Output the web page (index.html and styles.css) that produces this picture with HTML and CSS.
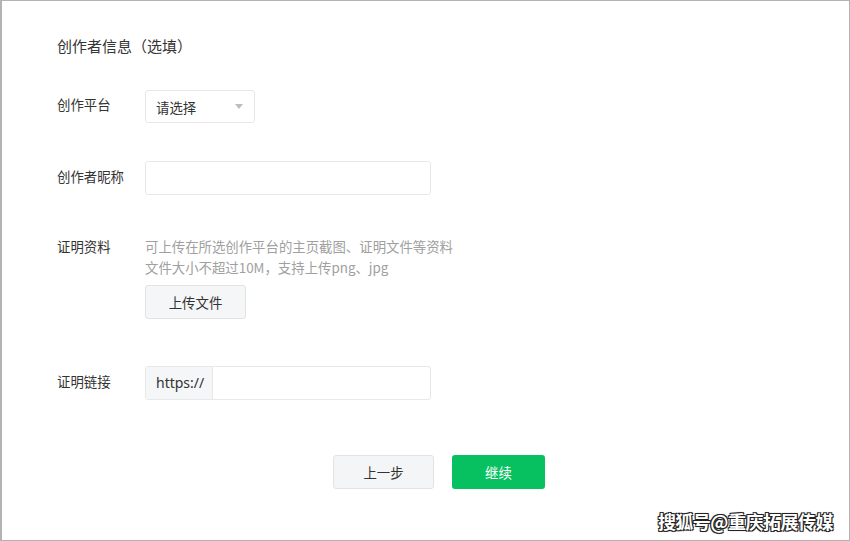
FILE: index.html
```html
<!DOCTYPE html>
<html lang="zh-CN">
<head>
<meta charset="utf-8">
<link rel="stylesheet" href="styles.css">
</head>
<body>
<div class="frame">
  <div class="form">
    <div class="title">创作者信息（选填）</div>

    <div class="row row-platform">
      <div class="label label-select">创作平台</div>
      <div class="select">
        <span class="select-text">请选择</span>
        <span class="caret"></span>
      </div>
    </div>

    <div class="row row-nick">
      <div class="label">创作者昵称</div>
      <div class="input"></div>
    </div>

    <div class="row row-proof">
      <div class="label label-proof">证明资料</div>
      <div class="proof">
        <div class="hint">可上传在所选创作平台的主页截图、证明文件等资料<br>文件大小不超过10M，支持上传png、jpg</div>
        <div class="btn btn-upload">上传文件</div>
      </div>
    </div>

    <div class="row row-link">
      <div class="label">证明链接</div>
      <div class="input group">
        <span class="prefix">https://</span>
        <span class="group-field"></span>
      </div>
    </div>

    <div class="actions">
      <div class="btn btn-prev">上一步</div>
      <div class="btn btn-next">继续</div>
    </div>
  </div>
  <div class="watermark">搜狐号@重庆拓展传媒</div>
</div>
</body>
</html>
```

FILE: styles.css
```css
* { box-sizing: border-box; }
html, body { margin: 0; padding: 0; background: #fff; }
body {
  font-family: "Noto Sans CJK SC", "Noto Sans", "Liberation Sans", sans-serif;
  color: #333;
}
.frame {
  position: relative;
  width: 850px;
  height: 541px;
  border: 1px solid #b3b3b3;
  border-left-width: 2px;
  overflow: hidden;
}
.form {
  padding-left: 55px;
  padding-top: 35px;
}
.title {
  font-size: 15px;
  line-height: 20px;
  color: #353535;
}
.row {
  display: flex;
  align-items: flex-start;
}
.label {
  width: 88px;
  flex: none;
  font-size: 13.4px;
  line-height: 20px;
  margin-top: 5px;
  color: #333;
}
.label-select { margin-top: 4px; }
.label-proof { margin-top: 0; }
.row-platform { margin-top: 34px; }
.row-nick { margin-top: 38px; }
.row-proof { margin-top: 41px; }
.row-link { margin-top: 47px; }

.select {
  width: 110px;
  height: 33px;
  border: 1px solid #e8e8e8;
  border-radius: 3px;
  display: flex;
  align-items: center;
  justify-content: space-between;
  padding: 0 11px 0 10px;
  font-size: 13.4px;
  color: #333;
}
.caret {
  width: 0;
  height: 0;
  border-left: 4.5px solid transparent;
  border-right: 4.5px solid transparent;
  border-top: 5px solid #bdbdbd;
}
.input {
  width: 286px;
  height: 34px;
  border: 1px solid #e8e8e8;
  border-radius: 3px;
}
.group {
  display: flex;
  overflow: hidden;
}
.prefix {
  width: 67px;
  flex: none;
  background: #f5f6f8;
  border-right: 1px solid #e8e8e8;
  font-size: 14px;
  line-height: 32px;
  padding-left: 10px;
  color: #333;
  font-family: "Noto Sans", "Noto Sans CJK SC", sans-serif;
}
.group-field { flex: 1; }

.hint {
  font-size: 13.4px;
  line-height: 21px;
  color: #a0a0a0;
}
.btn {
  height: 34px;
  border-radius: 3px;
  display: flex;
  align-items: center;
  justify-content: center;
  font-size: 13.4px;
}
.btn-upload {
  margin-top: 7px;
  width: 101px;
  height: 34px;
  background: #f5f6f7;
  border: 1px solid #e3e3e3;
  color: #333;
}
.actions {
  display: flex;
  gap: 18px;
  margin-top: 55px;
  padding-left: 276px;
}
.btn-prev {
  width: 101px;
  background: #f4f5f7;
  border: 1px solid #e3e3e3;
  color: #333;
}
.btn-next {
  width: 93px;
  background: #07c160;
  color: #fff;
}
.watermark {
  position: absolute;
  right: 16px;
  bottom: 8px;
  font-size: 18px;
  font-weight: bold;
  line-height: 22px;
  color: #fff;
  letter-spacing: -0.5px;
  text-shadow: -1px -1px 0 #222, 1px -1px 0 #222, -1px 1px 0 #222, 1px 1px 0 #222, 0 0 2px #000;
}
```
